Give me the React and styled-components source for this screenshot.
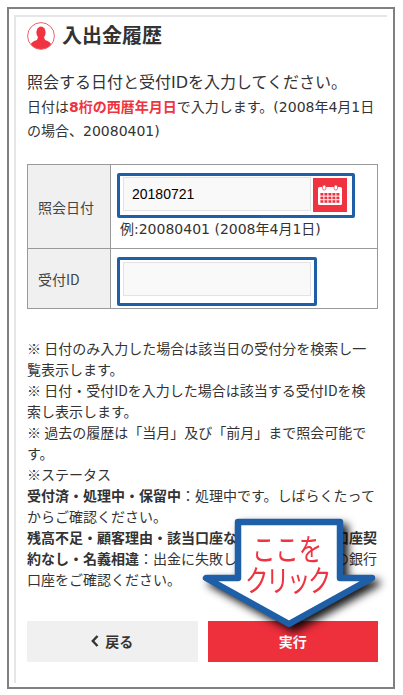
import styled, { createGlobalStyle } from "styled-components";

const GlobalStyle = createGlobalStyle`
    * {
        box-sizing: border-box;
    }

    body {
        margin: 0;
        background: #ffffff;
        color: #333333;
        font-family: "DejaVu Sans", "Noto Sans CJK JP", sans-serif;
    }
`;

function UserIcon() {
    return (
        <svg width="28" height="28" viewBox="0 0 28 28">
            <defs>
                <clipPath id="user-clip">
                    <circle cx="14" cy="14" r="13" />
                </clipPath>
            </defs>
            <circle cx="14" cy="14" r="13.4" fill="#ffffff" stroke="#f0606a" strokeWidth="1" />
            <g clipPath="url(#user-clip)" fill="#ef3340">
                <ellipse cx="14" cy="10.5" rx="4.6" ry="6" />
                <path d="M11 15 L17 15 L18 18 C22 19.5 25 20.5 26 28 L2 28 C3 20.5 6 19.5 10 18 Z" />
            </g>
        </svg>
    );
}

function CalendarIcon() {
    const cells = [];

    for (let row = 0; row < 3; row++) {
        for (let col = 0; col < 5; col++) {
            cells.push(<rect key={`${row}-${col}`} x={2.4 + col * 4} y={8 + row * 3.6} width="3" height="2.6" fill="#ef3340" />);
        }
    }

    return (
        <svg width="24" height="20" viewBox="0 0 24 20">
            <rect x="0" y="2" width="24" height="18" rx="1.5" fill="#ffffff" />
            {cells}
            <rect x="4.5" y="0" width="3.4" height="5" rx="1.7" fill="#ffffff" stroke="#ef3340" strokeWidth="0.7" />
            <rect x="16.1" y="0" width="3.4" height="5" rx="1.7" fill="#ffffff" stroke="#ef3340" strokeWidth="0.7" />
        </svg>
    );
}

export default function App() {
    return (
        <>
            <GlobalStyle />
            <Frame>
                <Card>
                    <Title>
                        <UserIcon />
                        <TitleText>入出金履歴</TitleText>
                    </Title>

                    <Lead>照会する日付と受付IDを入力してください。</Lead>
                    <Sub>
                        日付は<Red>8桁の西暦年月日</Red>で入力します。(2008年4月1日<br />
                        の場合、20080401)
                    </Sub>

                    <FormTable>
                        <tbody>
                            <tr>
                                <Label $height={84}>照会日付</Label>
                                <Field>
                                    <Highlight $width={238} $pad="1px 5px 3px 3px">
                                        <TextInput defaultValue="20180721" $height={34} />
                                        <CalendarButton type="button">
                                            <CalendarIcon />
                                        </CalendarButton>
                                    </Highlight>
                                    <Example>例:20080401 (2008年4月1日)</Example>
                                </Field>
                            </tr>
                            <tr>
                                <Label $height={60}>受付ID</Label>
                                <Field>
                                    <Highlight $width={200} $pad="2px 3px 7px 3px">
                                        <TextInput $height={34} />
                                    </Highlight>
                                </Field>
                            </tr>
                        </tbody>
                    </FormTable>

                    <Notes>
                        ※ 日付のみ入力した場合は該当日の受付分を検索し一<br />
                        覧表示します。<br />
                        ※ 日付・受付IDを入力した場合は該当する受付IDを検<br />
                        索し表示します。<br />
                        ※ 過去の履歴は「当月」及び「前月」まで照会可能で<br />
                        す。<br />
                        ※ステータス<br />
                        <b>受付済・処理中・保留中</b>：処理中です。しばらくたって<br />
                        からご確認ください。<br />
                        <b>残高不足・顧客理由・該当口座なし・無効口座・口座契</b><br />
                        <b>約なし・名義相違</b>：出金に失敗しました。ご利用の銀行<br />
                        口座をご確認ください。
                    </Notes>

                    <Buttons>
                        <BackButton type="button">
                            <svg width="8" height="12" viewBox="0 0 8 12">
                                <path d="M6.5 1 L1.8 6 L6.5 11" fill="none" stroke="#333333" strokeWidth="2.4" />
                            </svg>
                            戻る
                        </BackButton>
                        <RunButton type="button">実行</RunButton>
                    </Buttons>
                </Card>

                <Callout>
                    <svg width="190" height="125" viewBox="0 0 190 125">
                        <path
                            d="M40 10 L142 10 L142 66 L174 66 L91 112 L8 66 L40 66 Z"
                            fill="#ffffff"
                            stroke="#1f5fa8"
                            strokeWidth="6.5"
                            strokeLinejoin="round"
                        />
                    </svg>
                    <CalloutText>
                        <CalloutLine>ここを</CalloutLine>
                        <CalloutLine $tight>クリック</CalloutLine>
                    </CalloutText>
                </Callout>
            </Frame>
        </>
    );
}

const Frame = styled.div`

    position: relative;

    width: 388px;
    height: 682px;

    margin: 7px 0 0 7px;
    padding: 6px 6px 4px 5px;

    border: 2px solid #808080;

`;

const Card = styled.div`

    height: 100%;

    padding: 5px 7px 0 11px;

    border-top: 2px solid #e6e6e6;
    border-left: 2px solid #e6e6e6;

`;

const Title = styled.div`

    display: flex;
    align-items: center;
    gap: 7px;

    height: 28px;

`;

const TitleText = styled.h1`

    margin: 0 0 1px;

    font-size: 20px;
    font-weight: 700;
    line-height: 28px;

    color: #333333;

`;

const Lead = styled.p`

    margin: 21px 0 0;

    font-size: 16px;
    line-height: 24px;

    white-space: nowrap;

`;

const Sub = styled.p`

    margin: 0;

    font-size: 14px;
    line-height: 24px;

    white-space: nowrap;

`;

const Red = styled.b`

    color: #ef3340;

`;

const FormTable = styled.table`

    width: 351px;

    margin-top: 21px;

    border-collapse: collapse;

    table-layout: fixed;

`;

const Label = styled.th`

    width: 83px;
    height: ${(props) => props.$height}px;

    padding: 0 0 0 10px;

    background: #f0f0f0;
    border: 1px solid #999999;

    font-family: "Noto Sans CJK JP", sans-serif;
    font-size: 14px;
    font-weight: 400;
    text-align: left;

    color: #444444;

`;

const Field = styled.td`

    padding: 8px 0 0 6px;

    border: 1px solid #999999;

    vertical-align: top;

`;

const Highlight = styled.div`

    display: flex;
    gap: 2px;

    width: ${(props) => props.$width}px;

    padding: ${(props) => props.$pad};

    border: 3px solid #1f5fa8;
    border-radius: 2px;

`;

const TextInput = styled.input`

    width: 188px;
    height: ${(props) => props.$height}px;

    padding: 0 8px;

    background: #f9f9f9;
    border: 1px solid #e3e3e3;
    outline: none;

    font-family: "Liberation Sans", sans-serif;
    font-size: 14px;

    color: #000000;

`;

const CalendarButton = styled.button`

    display: flex;
    align-items: center;
    justify-content: center;

    width: 34px;
    height: 34px;

    margin-top: 1px;
    padding: 0;

    background: #ef3340;
    border: none;

`;

const Example = styled.div`

    padding-left: 3px;

    font-size: 14px;
    line-height: 23px;

    white-space: nowrap;

`;

const Notes = styled.div`

    margin-top: 29px;

    font-family: "Noto Sans CJK JP", sans-serif;
    font-size: 14px;
    line-height: 21px;

    white-space: nowrap;

`;

const Buttons = styled.div`

    display: grid;
    grid-template-columns: 1fr 1fr;
    gap: 10px;

    width: 351px;

    margin-top: 31px;

`;

const BackButton = styled.button`

    display: flex;
    align-items: center;
    justify-content: center;
    gap: 6px;

    height: 41px;

    padding: 0 0 2px;

    background: #f0f0f0;
    border: none;

    font-family: "Noto Sans CJK JP", sans-serif;
    font-size: 14px;
    font-weight: 700;

    color: #333333;

`;

const RunButton = styled(BackButton)`

    background: #ee2f3c;

    color: #ffffff;

`;

const Callout = styled.div`

    position: absolute;
    top: 503px;
    left: 189px;

    width: 190px;
    height: 125px;

    filter: drop-shadow(5px 5px 4px rgba(0, 0, 0, 0.9));

`;

const CalloutText = styled.div`

    position: absolute;
    top: 20px;
    left: 0;

    display: flex;
    flex-direction: column;
    align-items: center;

    width: 178px;

    font-family: "Noto Sans CJK JP", sans-serif;
    font-size: 30px;
    line-height: 31px;

    color: #ef3340;

`;

const CalloutLine = styled.span`

    letter-spacing: ${(props) => (props.$tight ? "-3px" : "0")};

    transform: scaleX(0.78);

`;
